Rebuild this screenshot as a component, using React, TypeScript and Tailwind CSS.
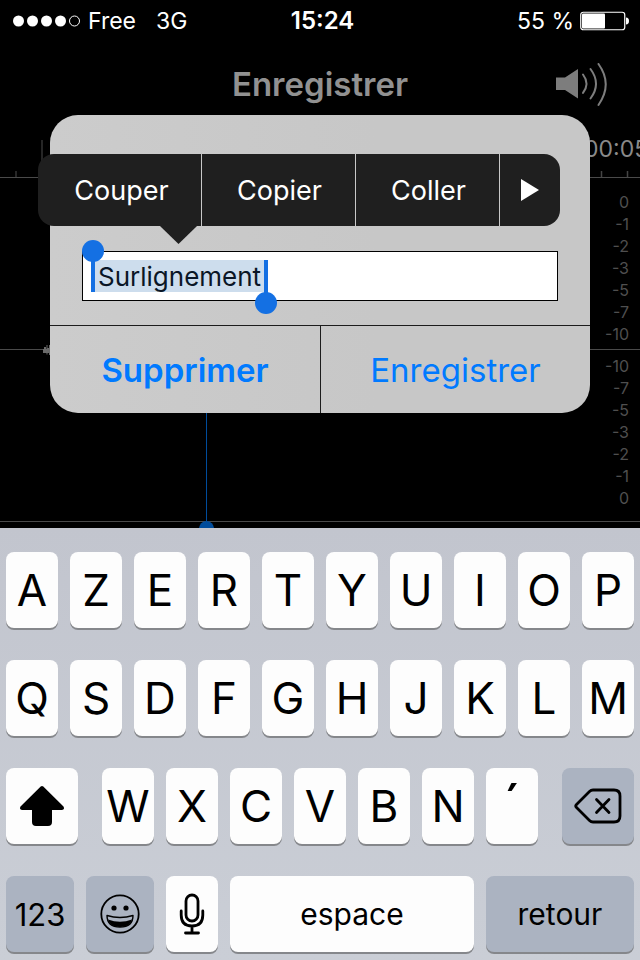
import React, { useState } from 'react';

const LEVELS = ['0', '-1', '-2', '-3', '-5', '-7', '-10'];

const ROW_1 = ['A', 'Z', 'E', 'R', 'T', 'Y', 'U', 'I', 'O', 'P'];
const ROW_2 = ['Q', 'S', 'D', 'F', 'G', 'H', 'J', 'K', 'L', 'M'];
const ROW_3 = ['W', 'X', 'C', 'V', 'B', 'N', '´'];

const keyBase = 'flex h-[76px] items-center justify-center rounded-lg text-black shadow-[0_2px_0_#85878b]';
const lightKey = 'bg-[#fdfdfd]';
const darkKey = 'bg-[#abb3c1]';

interface KeyProps {
    children: React.ReactNode;
    className: string;
    dark?: boolean;
    label?: string;
}

const Key: React.FC<KeyProps> = ({ children, className, dark, label }) => (
    <button type="button" aria-label={label} className={`${keyBase} ${dark ? darkKey : lightKey} ${className}`}>
        {children}
    </button>
);

const LetterKey: React.FC<{ letter: string }> = ({ letter }) => (
    <Key className={`min-w-0 flex-1 ${letter === '´' ? 'text-[56px]' : 'text-[44px]'}`}>{letter}</Key>
);

const StatusBar: React.FC = () => (
    <div className="flex h-10 items-center pt-0.5 pr-[11px] pl-3 text-[23px] text-white">
        <div className="flex flex-1 items-center">
            <svg width="70" height="12" viewBox="0 0 70 12" aria-hidden="true">
                <circle cx="6.5" cy="6" r="5.5" fill="#fff" />
                <circle cx="20.5" cy="6" r="5.5" fill="#fff" />
                <circle cx="34.5" cy="6" r="5.5" fill="#fff" />
                <circle cx="48.5" cy="6" r="5.5" fill="#fff" />
                <circle cx="62.5" cy="6" r="5" fill="none" stroke="#fff" />
            </svg>
            <span className="ml-1.5">Free</span>
            <span className="ml-5">3G</span>
        </div>
        <span className="pl-1 text-2xl font-semibold">15:24</span>
        <div className="flex flex-1 items-center justify-end gap-1.5">
            <span>55 %</span>
            <svg width="49" height="20" viewBox="0 0 49 20" aria-hidden="true">
                <rect x="0.75" y="1.25" width="44" height="17.5" rx="2.5" fill="none" stroke="#fff" strokeWidth="1.2" />
                <rect x="2" y="2.5" width="23" height="15" rx="1" fill="#fff" />
                <path d="M46 6.5c2 0 3 1.5 3 3.5s-1 3.500-3 3.500z" fill="#fff" />
            </svg>
        </div>
    </div>
);

const SpeakerIcon: React.FC = () => (
    <svg width="54" height="44" viewBox="0 0 54 44" fill="none" stroke="#7d7d7d" strokeWidth="2" strokeLinecap="round" aria-hidden="true">
        <path d="M1 14.500H10L23 6V35.500L10 27H1z" fill="#7d7d7d" stroke="none" />
        <path d="M28 11.500q7 9.200 0 18.400" />
        <path d="M35.500 6q11 14.700 0 29.500" />
        <path d="M43.500 1q14.500 20.200 0 41" />
    </svg>
);

const Levels: React.FC<{ values: string[] }> = ({ values }) => (
    <ul className="text-right text-base leading-[22px] text-[#4f4f4f]">
        {values.map((value) => (
            <li key={value}>{value}</li>
        ))}
    </ul>
);

const Recorder: React.FC = () => (
    <>
        <header className="grid h-[88px] grid-cols-[1fr_auto_1fr] items-center pt-0.5">
            <h1 className="col-start-2 text-[33px] font-semibold text-[#919191]">Enregistrer</h1>
            <button type="button" aria-label="Haut-parleur" className="mr-[31px] justify-self-end">
                <SpeakerIcon />
            </button>
        </header>
        <div className="flex h-[50px] items-end justify-between overflow-hidden border-b border-[#4a4a4a]">
            <svg width="48" height="37" viewBox="0 0 48 37" aria-hidden="true">
                <path d="M16 31V37M42 0V37" stroke="#333" strokeWidth="1.500" />
            </svg>
            <div className="flex h-full w-14 flex-col">
                <span className="pt-1 text-[23px] leading-[34px] text-[#8a8a8a]">00:05</span>
                <svg className="mt-auto shrink-0 self-end" width="54" height="6" viewBox="0 0 54 6" aria-hidden="true">
                    <path d="M15.500 0V6M41.500 0V6" stroke="#444" strokeWidth="1.500" />
                </svg>
            </div>
        </div>
        <div className="relative overflow-hidden pb-1.5">
            <div className="flex items-end justify-between border-b border-[#4a4a4a] pt-[13px] pr-[11px] pb-1">
                <svg className="relative top-3 ml-[43px]" width="12" height="12" viewBox="0 0 12 12" aria-hidden="true">
                    <path d="M0 4H1V2H3V4H3.500V0H4.500V3H6V0H7V10H6V8H4.500V9.500H3.500V8H0z" fill="#6a6a6a" />
                </svg>
                <Levels values={LEVELS} />
            </div>
            <div className="flex justify-end border-b border-[#4a4a4a] pt-[5px] pr-[11px] pb-3">
                <Levels values={[...LEVELS].reverse()} />
            </div>
            <div className="absolute inset-y-0 left-[206px] w-px bg-[#004c9c]" />
            <div className="absolute -bottom-2 left-[199px] size-[15px] rounded-full bg-[#004c9c]" />
        </div>
    </>
);

const EditMenu: React.FC = () => (
    <div role="menu" className="absolute -left-3 right-[30px] top-[39px] h-[72px] text-[27px] text-white">
        <div className="grid h-full grid-cols-[164fr_154fr_144fr_60fr] divide-x divide-[#c8c8c8] overflow-hidden rounded-2xl bg-[#1f1f1f]">
            <button type="button" role="menuitem" className="pt-0.5 pl-1">Couper</button>
            <button type="button" role="menuitem" className="pt-0.5 pl-0.5">Copier</button>
            <button type="button" role="menuitem" className="pt-0.5 pl-0.5">Coller</button>
            <button type="button" role="menuitem" aria-label="Suite" className="flex items-center justify-center">
                <svg width="18" height="22" viewBox="0 0 18 22" aria-hidden="true">
                    <path d="M0 0L18 11L0 22z" fill="#fff" />
                </svg>
            </button>
        </div>
        <svg className="absolute left-[122px] top-full" width="37" height="18" viewBox="0 0 37 18" aria-hidden="true">
            <path d="M0 0H37L18.500 18z" fill="#1f1f1f" />
        </svg>
    </div>
);

const SaveDialog: React.FC = () => {
    const [name, setName] = useState<string>('Surlignement');

    return (
        <div role="dialog" aria-label="Enregistrer" className="absolute inset-x-[50px] top-[115px]">
            <div className="overflow-hidden rounded-[28px] bg-linear-to-r from-[#cccccc] to-[#c7c7c7] to-60%">
                <div className="px-8 pt-[136px] pb-6">
                    <div className="relative h-[50px] border border-black bg-white">
                        <div className="absolute left-2 top-2 h-8 w-[177px] bg-[#cddded]" />
                        <input
                            type="text"
                            aria-label="Nom de l'enregistrement"
                            value={name}
                            onChange={(e) => setName(e.target.value)}
                            className="relative h-full w-full bg-transparent px-[15px] text-[26px] text-[#0a1626] outline-none"
                        />
                        <div className="absolute left-2 top-0 h-10 w-1 bg-[#1470e3]" />
                        <div className="absolute -left-px -top-3 size-[22px] rounded-full bg-[#1470e3]" />
                        <div className="absolute left-[181px] top-2 h-10 w-1 bg-[#1470e3]" />
                        <div className="absolute left-[172px] top-10 size-[22px] rounded-full bg-[#1470e3]" />
                    </div>
                </div>
                <div className="grid h-[88px] grid-cols-2 border-t border-[#1c1c1c] text-[33px] text-[#007aff]">
                    <button type="button" className="pt-0.5 font-semibold">Supprimer</button>
                    <button type="button" className="border-l border-[#1c1c1c] pt-0.5">Enregistrer</button>
                </div>
            </div>
            <EditMenu />
        </div>
    );
};

const Keyboard: React.FC = () => (
    <div className="flex flex-1 flex-col gap-8 bg-linear-to-b from-[#c2c5ce] to-[#caced6] px-1.5 pt-6 pb-2">
        {[ROW_1, ROW_2].map((row) => (
            <div key={row[0]} className="flex gap-3">
                {row.map((letter) => (
                    <LetterKey key={letter} letter={letter} />
                ))}
            </div>
        ))}
        <div className="flex gap-6">
            <Key className="w-[72px]" label="Majuscule">
                <svg width="46" height="42" viewBox="0 0 46 42" aria-hidden="true">
                    <path d="M21.700 1.600Q23 .5 24.300 1.600L44.500 21.500Q46 24.500 43 25H33V37Q33 41 29 41H17Q13 41 13 37V25H3Q0 24.500 1.500 21.500z" fill="#000" />
                </svg>
            </Key>
            <div className="flex flex-1 gap-3">
                {ROW_3.map((letter) => (
                    <LetterKey key={letter} letter={letter} />
                ))}
            </div>
            <Key className="w-[72px]" label="Effacer" dark>
                <svg width="48" height="36" viewBox="0 0 48 36" fill="none" stroke="#000" strokeWidth="2.800" strokeLinecap="round" strokeLinejoin="round" aria-hidden="true">
                    <path d="M19 2H40Q46 2 46 8V28Q46 34 40 34H19Q17 34 15.500 32.500L2.500 19.500Q1 18 2.500 16.500L15.500 3.500Q17 2 19 2z" />
                    <path d="M22.500 11.500L35 24.500M35 11.500L22.500 24.500" />
                </svg>
            </Key>
        </div>
        <div className="flex gap-3">
            <Key className="w-[68px] pt-0.5 text-[31px]" dark>123</Key>
            <Key className="w-[68px]" label="Emoji" dark>
                <svg width="40" height="40" viewBox="0 0 40 40" aria-hidden="true">
                    <circle cx="20" cy="20" r="18.700" fill="none" stroke="#000" strokeWidth="1.800" />
                    <circle cx="14" cy="14" r="2.600" />
                    <circle cx="26" cy="14" r="2.600" />
                    <path d="M7 21.500Q20 25.500 33 21.500Q33 33 20 33Q7 33 7 21.500z" fill="none" stroke="#000" strokeWidth="1.400" strokeLinejoin="round" />
                    <path d="M8 25.500Q20 30 32 25.500Q30 33 20 33Q10 33 8 25.500z" />
                </svg>
            </Key>
            <Key className="w-[52px]" label="Dictée">
                <svg width="26" height="42" viewBox="0 0 26 42" fill="none" stroke="#000" strokeWidth="2.800" strokeLinecap="round" aria-hidden="true">
                    <rect x="7" y="2" width="12" height="26" rx="6" />
                    <path d="M2.200 18V22Q2.200 33 13 33Q23.800 33 23.800 22V18M13 33V40M6.500 40H19.500" />
                </svg>
            </Key>
            <Key className="flex-1 text-[30px]">espace</Key>
            <Key className="w-[148px] text-[30px]" dark>retour</Key>
        </div>
    </div>
);

const App: React.FC = () => (
    <main className="relative flex min-h-screen flex-col bg-black font-['Inter',sans-serif]">
        <StatusBar />
        <Recorder />
        <SaveDialog />
        <Keyboard />
    </main>
);

export default App;
